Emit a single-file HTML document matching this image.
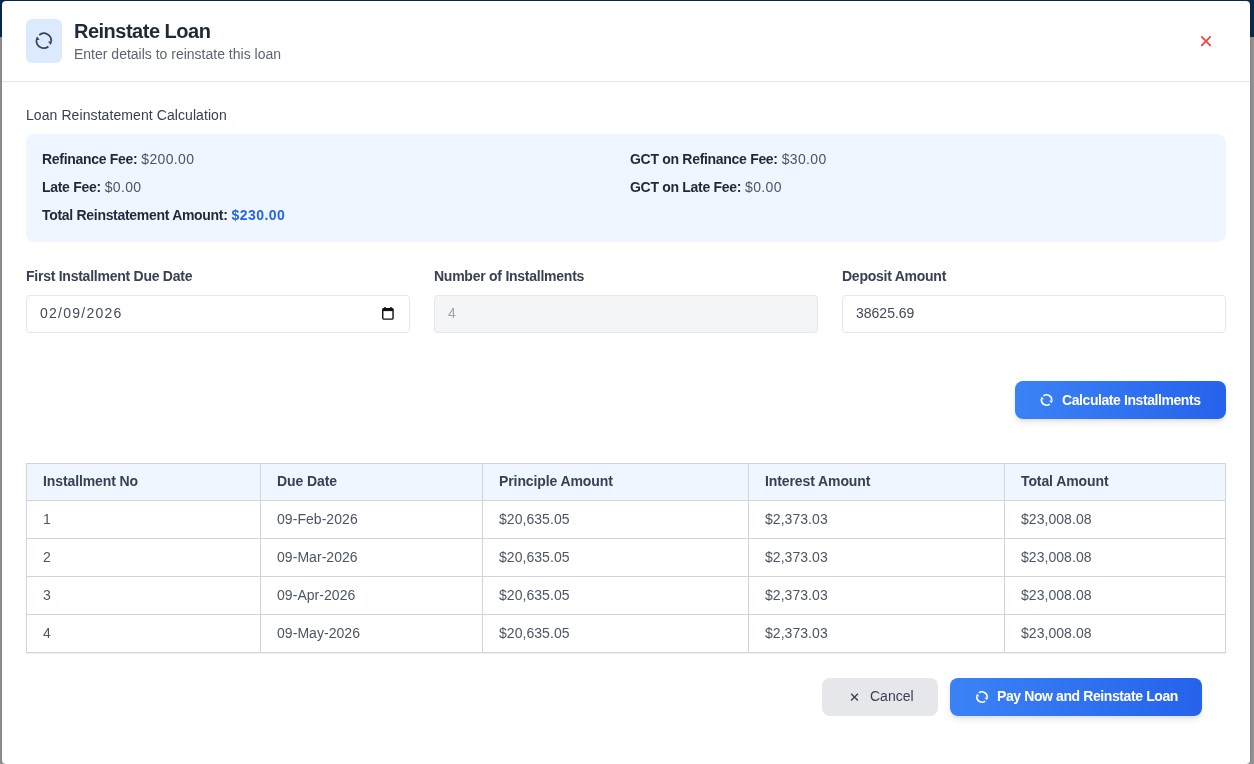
<!DOCTYPE html>
<html><head><meta charset="utf-8">
<style>
*{box-sizing:border-box;margin:0;padding:0}
html,body{width:1254px;height:764px;overflow:hidden;background:#939395;font-family:"Liberation Sans",sans-serif}
.nav{position:absolute;left:0;top:0;width:1254px;height:37px;background:#0a2a4c}
.modal{will-change:transform;position:absolute;left:2px;top:1px;width:1248px;height:763px;background:#fff;border-radius:4px;box-shadow:0 0 3px rgba(0,0,0,.25)}
.a{position:absolute;white-space:nowrap;line-height:1}
.t{font-size:14px}
.b{font-weight:700}
.hr{position:absolute;left:0;width:1248px;height:1px;background:#e5e7eb}
.iconbox{position:absolute;left:24px;top:18px;width:36px;height:44px;background:#dbeafe;border-radius:6px}
.calc{position:absolute;left:24px;top:133px;width:1200px;height:108px;background:#eff6ff;border-radius:8px}
.lbl{color:#1f2937;font-weight:700;letter-spacing:-0.3px}
.val{color:#4b5563;letter-spacing:0.35px}
.flabel{color:#374151;font-weight:700;font-size:14px;letter-spacing:-0.25px}
.inp{position:absolute;top:294px;width:384px;height:38px;border:1px solid #e5e7eb;border-radius:4px;background:#fff}
.inp.dis{background:#f4f5f7}
.btn{position:absolute;height:38px;border-radius:8px}
.blue{background:linear-gradient(to right,#3b82f6,#2563eb);box-shadow:0 4px 6px -1px rgba(0,0,0,.1),0 2px 4px -1px rgba(0,0,0,.06)}
table{position:absolute;left:24px;top:462px;border-collapse:collapse;font-size:14px;box-shadow:0 1px 1px rgba(0,0,0,.06)}
td,th{border:1px solid #d1d5db;padding:0 0 0 16px;text-align:left;height:38px;vertical-align:middle;line-height:1}
th{background:#eff6ff;color:#374151;font-weight:700;height:37px;letter-spacing:-0.1px;padding-bottom:2px}
td{color:#4b5563;padding-bottom:2px;letter-spacing:0.05px}
</style></head><body>
<div class="nav"></div>
<div class="modal">
  <div class="iconbox">
    <svg style="position:absolute;left:9px;top:13px" width="18" height="18" viewBox="-8.86 -8.7 18 18">
      <g fill="none" stroke="#374151" stroke-width="1.75">
        <path d="M -4.58 -5.75 A 7.35 7.35 0 0 1 7.35 0.6"/>
        <path d="M 4.58 5.75 A 7.35 7.35 0 0 1 -7.35 -0.6"/>
      </g>
      <g fill="#374151">
        <polygon points="4.2,0.9 8.3,0.5 6.9,4.2"/>
        <polygon points="-4.2,-0.9 -8.3,-0.5 -6.9,-4.2"/>
      </g>
    </svg>
  </div>
  <div class="a b" style="left:72px;top:20px;font-size:20px;color:#1f2937;letter-spacing:-0.5px">Reinstate Loan</div>
  <div class="a t" style="left:72px;top:46px;color:#5b6472">Enter details to reinstate this loan</div>
  <svg style="position:absolute;left:1197px;top:34px" width="14" height="14" viewBox="0 0 14 14"><path d="M2.8 1.9 L11.2 10.3 M11.2 1.9 L2.8 10.3" stroke="#ef4444" stroke-width="1.8" stroke-linecap="round"/></svg>
  <div class="hr" style="top:80px"></div>

  <div class="a t" style="left:24px;top:107px;color:#374151;letter-spacing:0.08px">Loan Reinstatement Calculation</div>
  <div class="calc">
    <div class="a t" style="left:16px;top:18px"><span class="lbl">Refinance Fee:</span> <span class="val">$200.00</span></div>
    <div class="a t" style="left:16px;top:46px"><span class="lbl">Late Fee:</span> <span class="val">$0.00</span></div>
    <div class="a t" style="left:16px;top:74px"><span class="lbl">Total Reinstatement Amount:</span> <span class="b" style="color:#2563eb;letter-spacing:0.45px">$230.00</span></div>
    <div class="a t" style="left:604px;top:18px"><span class="lbl">GCT on Refinance Fee:</span> <span class="val">$30.00</span></div>
    <div class="a t" style="left:604px;top:46px"><span class="lbl">GCT on Late Fee:</span> <span class="val">$0.00</span></div>
  </div>

  <div class="a flabel" style="left:24px;top:268px">First Installment Due Date</div>
  <div class="a flabel" style="left:432px;top:268px">Number of Installments</div>
  <div class="a flabel" style="left:840px;top:268px">Deposit Amount</div>
  <div class="inp" style="left:24px"><div class="a t" style="left:13px;top:10px;color:#414b5a;letter-spacing:1.25px">02/09/2026</div>
    <svg style="position:absolute;left:355px;top:11px" width="12" height="13" viewBox="0 0 12 13"><rect x="0.75" y="1.75" width="10.3" height="10.4" rx="1.2" fill="none" stroke="#111" stroke-width="1.4"/><rect x="0.5" y="1.5" width="10.8" height="2.6" fill="#111"/><rect x="2.2" y="0" width="1.5" height="2" fill="#111"/><rect x="8.1" y="0" width="1.5" height="2" fill="#111"/></svg>
  </div>
  <div class="inp dis" style="left:432px"><div class="a t" style="left:13px;top:10px;color:#9ca3af">4</div></div>
  <div class="inp" style="left:840px"><div class="a t" style="left:13px;top:10px;color:#414b5a">38625.69</div></div>

  <div class="btn blue" style="left:1013px;top:380px;width:211px">
    <svg style="position:absolute;left:25px;top:12px" width="14" height="14" viewBox="-9.43 -10 20 20">
      <g fill="none" stroke="#fff" stroke-width="2.3">
        <path d="M -4.58 -5.75 A 7.35 7.35 0 0 1 7.35 0.6"/>
        <path d="M 4.58 5.75 A 7.35 7.35 0 0 1 -7.35 -0.6"/>
      </g>
      <g fill="#fff">
        <polygon points="3.7,1.0 9.0,0.4 7.0,4.8"/>
        <polygon points="-3.7,-1.0 -9.0,-0.4 -7.0,-4.8"/>
      </g>
    </svg>
    <div class="a t b" style="left:47px;top:11.5px;color:#fff;letter-spacing:-0.42px">Calculate Installments</div>
  </div>

  <table>
    <tr><th style="width:234px">Installment No</th><th style="width:222px">Due Date</th><th style="width:266px">Principle Amount</th><th style="width:256px">Interest Amount</th><th style="width:221px">Total Amount</th></tr>
    <tr><td>1</td><td>09-Feb-2026</td><td>$20,635.05</td><td>$2,373.03</td><td>$23,008.08</td></tr>
    <tr><td>2</td><td>09-Mar-2026</td><td>$20,635.05</td><td>$2,373.03</td><td>$23,008.08</td></tr>
    <tr><td>3</td><td>09-Apr-2026</td><td>$20,635.05</td><td>$2,373.03</td><td>$23,008.08</td></tr>
    <tr><td>4</td><td>09-May-2026</td><td>$20,635.05</td><td>$2,373.03</td><td>$23,008.08</td></tr>
  </table>

  <div class="btn" style="left:820px;top:677px;width:116px;background:#e5e7eb">
    <svg style="position:absolute;left:27px;top:14px" width="10" height="10" viewBox="0 0 10 10"><path d="M2.1 1.7 L8.9 8.5 M8.9 1.7 L2.1 8.5" stroke="#374151" stroke-width="1.3"/></svg>
    <div class="a t" style="left:48px;top:11px;color:#374151">Cancel</div>
  </div>
  <div class="btn blue" style="left:948px;top:677px;width:252px">
    <svg style="position:absolute;left:25px;top:12px" width="14" height="14" viewBox="-10 -10 20 20">
      <g fill="none" stroke="#fff" stroke-width="2.3">
        <path d="M -4.58 -5.75 A 7.35 7.35 0 0 1 7.35 0.6"/>
        <path d="M 4.58 5.75 A 7.35 7.35 0 0 1 -7.35 -0.6"/>
      </g>
      <g fill="#fff">
        <polygon points="3.7,1.0 9.0,0.4 7.0,4.8"/>
        <polygon points="-3.7,-1.0 -9.0,-0.4 -7.0,-4.8"/>
      </g>
    </svg>
    <div class="a t b" style="left:47px;top:10.5px;color:#fff;letter-spacing:-0.4px">Pay Now and Reinstate Loan</div>
  </div>
</div>
</body></html>
